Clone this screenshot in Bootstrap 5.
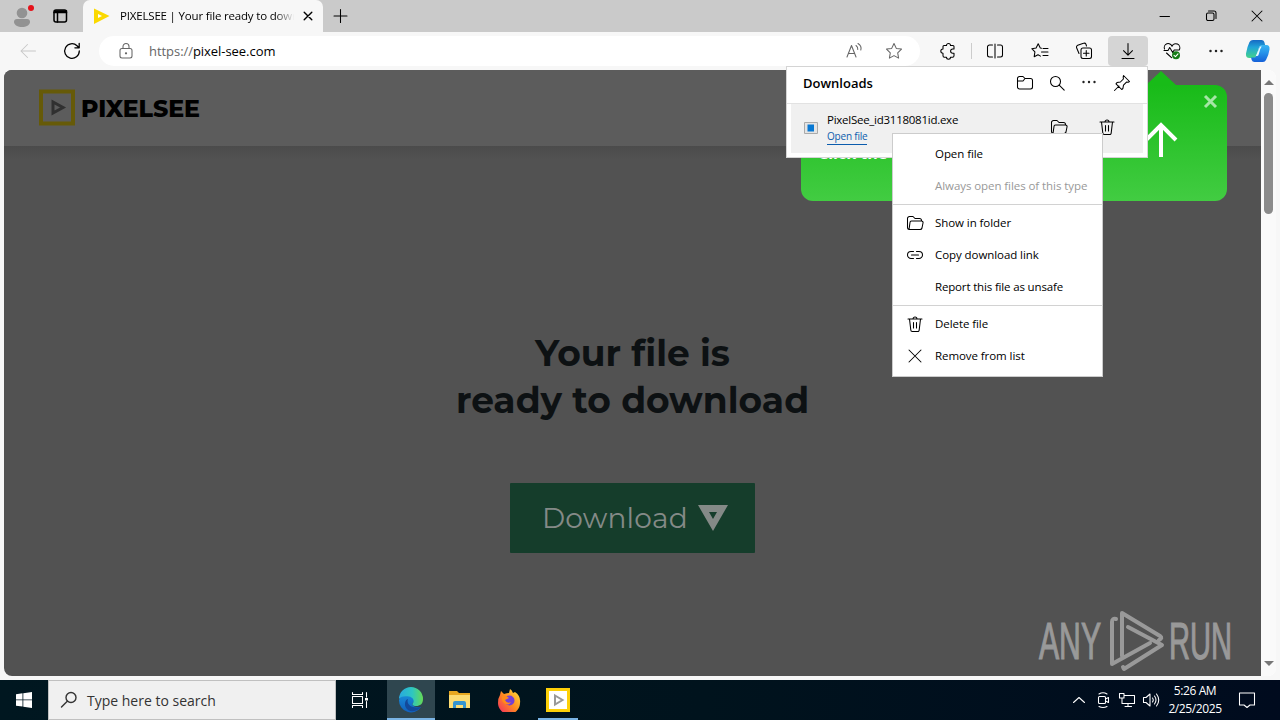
<!DOCTYPE html>
<html lang="en">
<head>
<meta charset="utf-8">
<title>PIXELSEE | Your file ready to download</title>
<link href="https://cdn.jsdelivr.net/npm/bootstrap@5.3.0/dist/css/bootstrap.min.css" rel="stylesheet">
<style>
body{width:1280px;height:720px;overflow:hidden;background:#f7f7f7;font-family:"Open Sans","Noto Sans",sans-serif;font-size:12px;line-height:16px;color:#000}
svg{display:block;flex:none}
.ic{fill:none;stroke:currentColor;stroke-width:1.05;stroke-linecap:round;stroke-linejoin:round}
.tabstrip{height:32px;background:#cacaca}
.strip-l{width:83px;border-radius:0 0 6px 0}
.tab-on{width:240px;background:#f7f7f7;border-radius:7px 7px 0 0;padding-left:10px}
.tab-title{width:174px;margin-left:10px;white-space:nowrap;overflow:hidden;font-size:11.5px;letter-spacing:-.18px;-webkit-mask-image:linear-gradient(90deg,#000 155px,transparent 174px);mask-image:linear-gradient(90deg,#000 155px,transparent 174px)}
.cap{width:46px;height:32px}
.toolbar{height:38px}
.tb{width:44px;height:30px}
.addr{width:821px;height:30px;margin-left:4px;border-radius:15px;background:#fff;padding-left:18px;color:#666}
.url{margin-left:14px;font-size:13px;letter-spacing:-.05px;line-height:18px}
.dl-on{width:40px;background:#d5d5d5;border-radius:4px;margin:0 2px}
.view{height:606px;margin:0 4px;border-radius:8px;overflow:hidden;background:#fff}
.page{width:1257px;background:#525252}
.site-head{height:76px;background:#5c5c5c;padding-left:35px}
.site-shadow{height:14px;background:linear-gradient(#4b4b4b,#525252)}
.brand{font-family:"Montserrat","Inter",sans-serif;font-weight:800;font-size:24px;line-height:24px;fill:#000}
.hero{padding-top:170px}
.hero h1{font-family:"Montserrat","Inter",sans-serif;font-weight:700;font-size:36px;line-height:47px;color:#0d1113;margin:0}
.get{width:245px;height:70px;margin-top:59px;background:#153d2b;border-radius:1px;color:#848a87;font-family:"Montserrat","Inter",sans-serif;font-weight:400;font-size:28px;letter-spacing:.2px;padding:0 0 0 32px;border:0}
.scroller{width:15px;background:#fafafa;padding:8px 0 8px}
.thumb{width:9px;height:121px;border-radius:5px;background:#8b8b8b;margin-top:5px}
.wm{right:42px;bottom:47px;color:#999}
.notice{left:801px;top:70px;width:426px}
.notice-body{height:116px;border-radius:12px;background:linear-gradient(#18bb18,#42cc42)}
.tip{margin-left:345px;height:15px}
.dlp{left:786px;top:66px;width:362px;height:92px;background:#fff;border:1px solid #d4d4d4;padding:0 4px 4px}
.dlp-h{height:37px;padding:0 8px 5px 12px;border-bottom:1px solid #e2e2e2;margin:0 -4px}
.dlp-i{height:49px;background:#f0f0f0;padding-left:13px}
.exe{font-size:11.5px;letter-spacing:-.26px;white-space:nowrap}
.open-link{font-size:10px;letter-spacing:-.2px;line-height:13px;margin-top:2px;padding-bottom:1px;color:#0b5cad;border-bottom:1px solid #0b5cad}
.menu{left:892px;top:133px;width:211px;height:244px;background:#fff;border:1px solid #ccc;padding:4px 0}
.mi{height:32px;padding-left:13px;white-space:nowrap;font-size:11.5px;letter-spacing:-.07px}
.mi .mi-ic{width:18px;margin-right:11px}
.msep{height:1px;background:#d2d2d2;margin:2px 0}
.taskbar{height:40px;margin-top:4px;background:linear-gradient(90deg,#001720,#00131d 55%,#000b1e);color:#fff}
.tk{width:48px;height:40px}
.search{width:288px;background:#f0f0f0;border:1px solid #c0c0c0;color:#333;font-size:14px;padding-left:11px}
.on{background:#2f464f;border-bottom:2px solid #7ab4e4}
.clock{width:70px;text-align:center;line-height:18px;font-size:12px;letter-spacing:-.4px}
</style>
</head>
<body>
<div class="tabstrip d-flex">
  <div class="strip-l d-flex align-items-center">
    <svg class="ms-2" width="32" height="32" viewBox="0 0 32 32"><circle cx="14" cy="13" r="5.3" fill="#929292"/><path d="M6 22q0-3 3-3h10q3 0 3 3c0 3-4 5-8 5s-8-2-8-5" fill="#929292"/><circle cx="23" cy="8" r="3" fill="#e5121a"/></svg>
    <svg class="ic ms-2" style="stroke-width:1.5" width="24" height="24" viewBox="0 0 24 24"><rect x="6" y="6" width="12.500" height="12" rx="2"/><path d="M6 8.500h12.500M9.500 9v9M6.500 7h12"/></svg>
  </div>
  <div class="tab-on d-flex align-items-center">
    <svg width="17" height="18" viewBox="0 0 17 18"><path d="M1 1.500 16.500 9 1 17z" fill="#fbd900"/><path d="M5 7l4 2-4 2z" fill="#fff"/></svg>
    <span class="tab-title">PIXELSEE | Your file ready to download</span>
    <svg class="ic" style="stroke-width:1.4;margin-left:9px" width="10" height="10" viewBox="0 0 10 10"><path d="m1.200 1.200 7.600 7.600m0-7.600L1.200 8.800"/></svg>
  </div>
  <svg class="ic ms-2" style="margin-top:7px" width="18" height="18" viewBox="0 0 18 18"><path d="M9.500 2.500v13M3 9h13"/></svg>
  <div class="ms-auto d-flex">
    <div class="cap d-flex align-items-center justify-content-center"><svg class="ic" width="12" height="12" viewBox="0 0 12 12"><path d="M1 6.500h9.500"/></svg></div>
    <div class="cap d-flex align-items-center justify-content-center"><svg class="ic" width="12" height="12" viewBox="0 0 12 12"><rect x="1.500" y="3" width="7.500" height="7.500" rx="1.500"/><path d="M3.500 1H9a2 2 0 0 1 2 2v5.500"/></svg></div>
    <div class="cap d-flex align-items-center justify-content-center"><svg class="ic" width="12" height="12" viewBox="0 0 12 12"><path d="m1 1 10 10m0-10L1 11"/></svg></div>
  </div>
</div>
<div class="toolbar d-flex align-items-center">
  <div class="d-flex align-items-center justify-content-center tb ms-2" style="width:40px;color:#c8c8c8"><svg class="ic" width="18" height="18" viewBox="0 0 18 18"><path d="M16.500 9H2m6.500-6.500L2 9l6.500 6.500"/></svg></div>
  <div class="d-flex align-items-center justify-content-center tb" style="width:47px"><svg class="ic" style="stroke-width:1.3" width="18" height="18" viewBox="0 0 18 18"><path d="M16.300 9A7.300 7.300 0 1 1 14 3.700l2 2M16.200 1.500v4.300h-4.300"/></svg></div>
  <div class="addr d-flex align-items-center">
    <svg class="ic" width="18" height="18" viewBox="0 0 18 18"><rect x="3" y="6.500" width="12" height="9.500" rx="2"/><path d="M6 6.500V4.500a3 3 0 0 1 6 0v2"/><circle cx="9" cy="11.300" r=".6" fill="currentColor"/></svg>
    <span class="url">https://<span class="text-black">pixel-see.com</span></span>
    <svg class="ic ms-auto" width="18" height="18" viewBox="0 0 18 18"><path d="m2 15 4.500-11.500L11 15M3.500 11.500h6M11 3.500q2 1.500 1.800 4M13 1.500q4 2.500 2.800 6.500"/></svg>
    <svg class="ic" style="margin-left:22px;margin-right:17px" width="18" height="18" viewBox="0 0 18 18"><path d="m9 1.500 2.300 4.900 5.200.7-3.800 3.700.9 5.300L9 13.600l-4.600 2.500.9-5.300L1.500 7.100l5.200-.7z"/></svg>
  </div>
  <div class="tb d-flex align-items-center justify-content-center" style="margin-left:6px"><svg class="ic" width="18" height="18" viewBox="0 0 18 18"><path d="M5 3.500h2.500a2 2 0 0 1 4 0H14a1 1 0 0 1 1 1V7h-1.300a2.100 2.100 0 0 0 0 4.200H15v2.600a1.500 1.500 0 0 1-1.500 1.500h-2a2 2 0 0 1-4 0H5.400A1.500 1.500 0 0 1 4 13.800v-2.500a2.200 2.200 0 0 1 0-4.400V4.500a1 1 0 0 1 1-1z"/></svg></div>
  <div style="width:1px;height:16px;background:#ccc;margin-left:1px;margin-right:1px"></div>
  <div class="tb d-flex align-items-center justify-content-center"><svg class="ic" width="18" height="18" viewBox="0 0 18 18"><path d="M6.500 3H3.500a2 2 0 0 0-2 2v8a2 2 0 0 0 2 2h3M11.500 3h3a2 2 0 0 1 2 2v8a2 2 0 0 1-2 2h-3M9 2v14"/></svg></div>
  <div class="tb d-flex align-items-center justify-content-center" style="margin-left:1px"><svg class="ic" width="18" height="18" viewBox="0 0 18 18"><path d="M10.500 6.200 9.300 6 7.200 1.800 5.100 6l-4.300.7 3.100 3.200-.7 4.800L7 12.800l2.500 1.300M12 6.500h5M10.500 10H17M12 13.500h5"/></svg></div>
  <div class="tb d-flex align-items-center justify-content-center"><svg class="ic" width="18" height="18" viewBox="0 0 18 18"><rect x="6" y="6" width="10.500" height="10.500" rx="2"/><path d="M11.250 8.500v5.500M8.500 11.250h5.500M4 11.500 1.500 5.500a2 2 0 0 1 1.200-2.300L8.500 1.300a2 2 0 0 1 2.500 1L11.500 4"/></svg></div>
  <div class="tb dl-on d-flex align-items-center justify-content-center"><svg class="ic" width="18" height="18" viewBox="0 0 18 18"><path d="M9 1.500v11.500M4.500 8.700 9 13.200l4.500-4.500M3 16.500h12"/></svg></div>
  <div class="tb d-flex align-items-center justify-content-center"><svg class="ic" width="18" height="18" viewBox="0 0 18 18"><path d="M1.500 7A4 4 0 0 1 9 4.200 4 4 0 0 1 16.500 7.500M3.500 11l5 4.700M1 8.500h4l1.700-3 3 5 1.500-2.500h5"/><circle cx="13" cy="13.200" r="4" fill="#157c17" stroke="none"/><path d="m11 13.300 1.500 1.400 2.500-2.800" stroke="#fff"/></svg></div>
  <div class="tb d-flex align-items-center justify-content-center"><svg width="18" height="18" viewBox="0 0 18 18" fill="#222"><circle cx="3.500" cy="9" r="1.250"/><circle cx="9" cy="9" r="1.250"/><circle cx="14.500" cy="9" r="1.250"/></svg></div>
  <svg width="26" height="26" viewBox="0 0 26 26" style="margin-left:7px"><defs><linearGradient id="c1" x2="0" y2="1"><stop stop-color="#1669c4"/><stop offset=".4" stop-color="#20a4d8"/><stop offset="1" stop-color="#45d38a"/></linearGradient><linearGradient id="c2" x2="0" y2="1"><stop stop-color="#38b5f2"/><stop offset=".45" stop-color="#2694ea"/><stop offset="1" stop-color="#1560d8"/></linearGradient></defs><path d="M8 2h8.500q2.200 0 2.800 2l1 3.500h-3.800q-2 0-2.700 2.500l-2.300 7.500q-.8 2.500-3 2.500H4.500Q.5 20 1 15.500 2 9 4.500 4 5.500 2 8 2" fill="url(#c1)"/><path d="M18 24H9.500q-2.200 0-2.800-2L6 19.500h3q2 0 2.700-2.500L14 9.500Q14.800 7 17 7h4.500q3.500 0 3 4.500-1 6.500-3.500 10.500-1 2-3 2" fill="url(#c2)"/><path d="M15 8.500h1.700l-1.500 2.800-1.700 5.700q-.3 1-1.500 1h-1.200z" fill="#e8fbff"/></svg>
</div>

<main class="view d-flex">
  <div class="page">
    <header class="site-head d-flex align-items-center">
      <svg width="38" height="38" viewBox="0 0 38 38"><rect x="2" y="2.500" width="32" height="32" fill="none" stroke="#665a08" stroke-width="4"/><path d="M14 13v11l10-5.500z" fill="none" stroke="#303030" stroke-width="3"/></svg>
      <svg width="130" height="34" viewBox="0 0 130 34"><text class="brand" x="4" y="26" textLength="119" lengthAdjust="spacingAndGlyphs">PIXELSEE</text></svg>
    </header>
    <div class="site-shadow"></div>
    <section class="hero d-flex flex-column align-items-center text-center">
      <h1>Your file is<br>ready to download</h1>
      <button class="get d-flex align-items-center">Download<svg style="margin-left:9px" width="32" height="28" viewBox="0 0 32 28"><path fill-rule="evenodd" d="M1 1h30L16 27zM12 8l4 7 4-7z" fill="currentColor"/></svg></button>
    </section>
  </div>
  <div class="scroller d-flex flex-column align-items-center">
    <svg width="10" height="10" viewBox="0 0 10 10"><path d="m0 7 5-5 5 5z" fill="#777"/></svg>
    <div class="thumb"></div>
    <svg class="mt-auto" width="10" height="10" viewBox="0 0 10 10"><path d="m0 3 5 5 5-5z" fill="#777"/></svg>
  </div>
</main>

<svg class="wm position-absolute" width="200" height="64" viewBox="0 0 200 64" font-family="Liberation Sans" font-size="52" fill="currentColor"><g stroke="currentColor" stroke-width="1.2"><text x="1" y="50" textLength="62" lengthAdjust="spacingAndGlyphs">ANY</text><text x="131" y="50" textLength="63" lengthAdjust="spacingAndGlyphs">RUN</text></g><g fill="none" stroke="currentColor" stroke-width="4" stroke-linejoin="round" stroke-linecap="round"><path d="M78 10q-4-1-4 3v42l38-21M84 47V4l38 23q3 2-1 4M90 18l34 18-38 24-1-2"/></g></svg>

<aside class="notice position-absolute">
  <svg class="tip" width="30" height="15" viewBox="0 0 30 15"><path d="M15 1 30 15H0z" fill="#18bb18"/></svg>
  <div class="notice-body d-flex text-white">
    <strong style="margin:56px 0 0 17px;font-size:16px;line-height:24px">Click the</strong>
    <svg class="ms-auto" style="margin-top:37px" width="36" height="38" viewBox="0 0 36 38"><path d="M18 35V4M3 18 18 3l15 15" fill="none" stroke="#fff" stroke-width="4"/></svg>
    <svg style="margin:9px 9px 0 24px" width="15" height="15" viewBox="0 0 15 15"><path d="m2 2 11 11m0-11L2 13" stroke="#a5e6a5" stroke-width="3"/></svg>
  </div>
</aside>

<section class="dlp position-absolute">
  <div class="dlp-h d-flex align-items-center">
    <b class="me-auto ps-1" style="font-size:13px;font-weight:600">Downloads</b>
    <svg class="ic" width="18" height="18" viewBox="0 0 18 18"><path d="M1.500 4.500a2 2 0 0 1 2-2H7l2 2h5.500a2 2 0 0 1 2 2V13a2 2 0 0 1-2 2h-11a2 2 0 0 1-2-2zM1.500 7H7l2-2.500"/></svg>
    <svg class="ic" style="margin-left:14px" width="18" height="18" viewBox="0 0 18 18"><circle cx="7.500" cy="7.500" r="5"/><path d="m11.200 11.200 5 5"/></svg>
    <svg style="margin-left:14px" width="18" height="18" viewBox="0 0 18 18" fill="#222"><circle cx="3.500" cy="8" r="1.200"/><circle cx="9" cy="8" r="1.200"/><circle cx="14.500" cy="8" r="1.200"/></svg>
    <svg class="ic" style="margin-left:15px;margin-right:8px" width="18" height="18" viewBox="0 0 18 18"><path d="m10.500 1.500 6 6-1.300.8-1.700-.2-3 3-.6 3.400-1.200 1L3 9.800l1-1.200 3.400-.6 3-3-.2-2zM6 12l-4.500 4.500"/></svg>
  </div>
  <div class="dlp-i d-flex">
    <svg style="margin-top:18px" width="14" height="12" viewBox="0 0 14 12"><path d="M.5.500h13v11H.5z" fill="#e4e4e4" stroke="#aaa"/><path d="M3.500 2.500H10v7H3.500z" fill="#0878d3"/></svg>
    <div style="margin:8px 0 0 9px"><div class="exe">PixelSee_id3118081id.exe</div><span class="open-link d-inline-block">Open file</span></div>
    <svg class="ic ms-auto" style="margin-top:14px" width="18" height="18" viewBox="0 0 18 18"><path d="M3 15.500A2 2 0 0 1 1.500 13.500V4.500a2 2 0 0 1 2-2H7l2 2h4.500a2 2 0 0 1 2 2M3 15.500l1-7a1.500 1.500 0 0 1 1.500-1.500h10a1.500 1.500 0 0 1 1.500 2l-1 5a2 2 0 0 1-2 1.500z"/></svg>
    <svg class="ic" style="margin:14px 27px 0 30px" width="18" height="18" viewBox="0 0 18 18"><path d="M2 4h14M3.500 4l1.300 11a1.500 1.500 0 0 0 1.500 1.500h5.400a1.500 1.500 0 0 0 1.500-1.500l1.300-11M7 4a2 2 0 0 1 4 0M7.500 7.500v5.500M10.500 7.500v5.500"/></svg>
  </div>
</section>

<nav class="menu position-absolute">
  <div class="mi d-flex align-items-center"><span class="mi-ic"></span><span>Open file</span></div>
  <div class="mi d-flex align-items-center" style="color:#999"><span class="mi-ic"></span><span>Always open files of this type</span></div>
  <div class="msep"></div>
  <div class="mi d-flex align-items-center"><svg class="mi-ic ic" width="18" height="18" viewBox="0 0 18 18"><path d="M3 15.500A2 2 0 0 1 1.500 13.500V4.500a2 2 0 0 1 2-2H7l2 2h4.500a2 2 0 0 1 2 2M3 15.500l1-7a1.500 1.500 0 0 1 1.500-1.500h10a1.500 1.500 0 0 1 1.500 2l-1 5a2 2 0 0 1-2 1.500z"/></svg><span>Show in folder</span></div>
  <div class="mi d-flex align-items-center"><svg class="mi-ic ic" width="18" height="18" viewBox="0 0 18 18"><path d="M7.500 5.500H5a3.500 3.500 0 0 0 0 7h2.500M10.500 5.500H13a3.500 3.500 0 0 1 0 7h-2.500M5.500 9h7"/></svg><span>Copy download link</span></div>
  <div class="mi d-flex align-items-center"><span class="mi-ic"></span><span style="letter-spacing:-.16px">Report this file as unsafe</span></div>
  <div class="msep"></div>
  <div class="mi d-flex align-items-center"><svg class="mi-ic ic" width="18" height="18" viewBox="0 0 18 18"><path d="M2 4h14M3.500 4l1.300 11a1.500 1.500 0 0 0 1.500 1.500h5.400a1.500 1.500 0 0 0 1.500-1.500l1.300-11M7 4a2 2 0 0 1 4 0M7.500 7.500v5.500M10.500 7.500v5.500"/></svg><span>Delete file</span></div>
  <div class="mi d-flex align-items-center"><svg class="mi-ic ic" width="18" height="18" viewBox="0 0 18 18"><path d="m3 3 12 12m0-12L3 15"/></svg><span>Remove from list</span></div>
</nav>

<footer class="taskbar d-flex">
  <div class="tk d-flex align-items-center justify-content-center"><svg width="16" height="16" viewBox="0 0 16 16" fill="#fff"><path d="M0 2.200 6.500 1.300v6.200H0zM7.300 1.200 16 0v7.500H7.300zM0 8.300h6.500v6.300L0 13.700zM7.300 8.300H16V16l-8.700-1.200z"/></svg></div>
  <div class="search d-flex align-items-center"><svg class="ic" style="stroke-width:1.4" width="18" height="18" viewBox="0 0 18 18"><circle cx="11" cy="6.500" r="5"/><path d="M7.300 10.200 1.500 16"/></svg><span style="margin-left:9px;padding-top:2px">Type here to search</span></div>
  <div class="tk d-flex align-items-center justify-content-center"><svg class="ic" width="18" height="18" viewBox="0 0 18 18"><path d="M1.500 1.500v2h10v-2M1.500 16.500v-2h10v2M1.500 5.500h10v7h-10zM15.500 1.500V6M15.500 10.500v6"/><path d="M14 7h3v2.500h-3z" fill="#fff" stroke="none"/></svg></div>
  <div class="tk on d-flex align-items-center justify-content-center" style="margin-left:3px;padding-top:2px"><svg width="26" height="26" viewBox="0 0 26 26"><defs><linearGradient id="e1"><stop stop-color="#28a9df"/><stop offset=".55" stop-color="#2ec6c1"/><stop offset="1" stop-color="#65da55"/></linearGradient><linearGradient id="e2" x2="0" y2="1"><stop stop-color="#1a91dc"/><stop offset="1" stop-color="#1160bd"/></linearGradient></defs><path d="M1 13a12 12 0 0 1 12-8q5 3 4 8l-3 4q2 4 9 3a12 12 0 0 1-22-7" fill="url(#e2)"/><path d="M1 12a12 12 0 0 1 24 0c0 5-3 7-7 7-3 0-4.500-1.500-3-3 2-2.500-.5-6-4-6.500C7 9 3 9 1 12" fill="url(#e1)"/><path d="M10 12c-2 5 3 10 13 8-3 5-13 6-15.500 0C6 16 8 12 10 12" fill="#13499a"/></svg></div>
  <div class="tk d-flex align-items-center justify-content-center" style="margin-left:1px"><svg width="22" height="20" viewBox="0 0 22 20"><path d="M0 1h8l2 2h11v15H0z" fill="#e8a820"/><path d="M0 5h21v13H0z" fill="#fddc72"/><path d="M4 18v-5q0-2 2-2h9q2 0 2 2v5h-3v-3H7v3z" fill="#3594cf"/></svg></div>
  <div class="tk d-flex align-items-center justify-content-center" style="margin-left:1px"><svg width="24" height="24" viewBox="0 0 24 24"><defs><linearGradient id="f" x1="1" x2="0" y2="1"><stop stop-color="#ffe53c"/><stop offset=".5" stop-color="#ff8a20"/><stop offset="1" stop-color="#f12367"/></linearGradient></defs><path d="M3 7 4 3l3 3q3-1 5-1l1-4q2 1 3 4l2-1q6 4 5 11a11 11 0 0 1-22 0q0-5 2-8" fill="url(#f)"/><circle cx="12.500" cy="12.500" r="5" fill="#7540d5"/><path d="M5 8q4-1 7 2l-4 2q2 4 6 2-3 5-8 0-2-3-1-6" fill="#ff8b19"/></svg></div>
  <div class="tk d-flex align-items-center justify-content-center" style="margin-left:5px;width:40px;border-bottom:2px solid #7ab4e4;padding-top:2px"><svg width="24" height="24" viewBox="0 0 24 24"><path d="M1.500 1.500h21v21h-21z" fill="#fff" stroke="#fdd008" stroke-width="3"/><path d="m9 7.500 7.500 4.500L9 16.500z" fill="none" stroke="#999" stroke-width="2"/></svg></div>
  <div class="ms-auto d-flex align-items-center" style="gap:6px;padding-right:24px">
    <svg class="ic" width="18" height="18" viewBox="0 0 18 18"><path d="m3.500 11.500 5.500-5 5.500 5"/></svg>
    <svg class="ic" width="18" height="18" viewBox="0 0 18 18"><rect x="4.500" y="5.500" width="7" height="7" rx="1"/><path d="m11.500 8 3-1.500v5l-3-1.500M5 3q4-2.500 8 0M5 15.500q4 2 8 0"/></svg>
    <svg class="ic" width="18" height="18" viewBox="0 0 18 18"><path d="M6 4.500h10.500v8H4V9M10 12.500v3M7 15.500h6.500M1.500 2.500H6V7H1.500zM4 7v2"/></svg>
    <svg class="ic" width="18" height="18" viewBox="0 0 18 18"><path d="M1.500 6.500H4l4-3.500v12l-4-3.500H1.500zM10.500 7q1.500 2 0 4M12.500 5q3 4 0 8M14.500 3q4.500 6 0 12"/></svg>
    <div class="clock" style="margin:0 -6px">5:26 AM<br>2/25/2025</div>
    <svg class="ic" style="margin-left:8px" width="18" height="18" viewBox="0 0 18 18"><path d="M1.500 2h15v12H12l-3 2.500L6 14H1.500z"/></svg>
  </div>
</footer>
<script src="https://cdn.jsdelivr.net/npm/bootstrap@5.3.0/dist/js/bootstrap.bundle.min.js"></script>
</body>
</html>
